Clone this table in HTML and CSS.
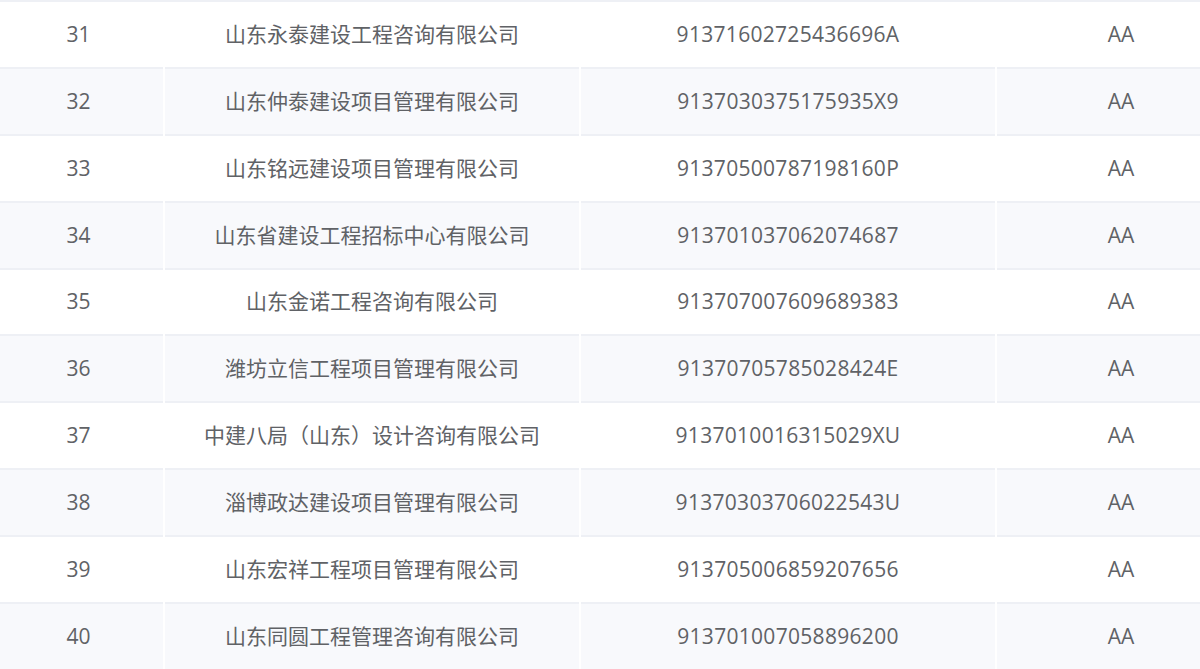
FILE: index.html
```html
<!DOCTYPE html>
<html lang="zh-CN">
<head>
<meta charset="utf-8">
<title>列表</title>
<link rel="stylesheet" href="styles.css">
</head>
<body>
<div class="wrap">
<table class="grid">
<colgroup><col class="c1"><col class="c2"><col class="c3"><col class="c4"></colgroup>
<tbody>
<tr><td>31</td><td>山东永泰建设工程咨询有限公司</td><td class="code">91371602725436696A</td><td>AA</td></tr>
<tr><td>32</td><td>山东仲泰建设项目管理有限公司</td><td class="code">9137030375175935X9</td><td>AA</td></tr>
<tr><td>33</td><td>山东铭远建设项目管理有限公司</td><td class="code">91370500787198160P</td><td>AA</td></tr>
<tr><td>34</td><td>山东省建设工程招标中心有限公司</td><td class="code">913701037062074687</td><td>AA</td></tr>
<tr><td>35</td><td>山东金诺工程咨询有限公司</td><td class="code">913707007609689383</td><td>AA</td></tr>
<tr><td>36</td><td>潍坊立信工程项目管理有限公司</td><td class="code">91370705785028424E</td><td>AA</td></tr>
<tr><td>37</td><td>中建八局（山东）设计咨询有限公司</td><td class="code">9137010016315029XU</td><td>AA</td></tr>
<tr><td>38</td><td>淄博政达建设项目管理有限公司</td><td class="code">91370303706022543U</td><td>AA</td></tr>
<tr><td>39</td><td>山东宏祥工程项目管理有限公司</td><td class="code">913705006859207656</td><td>AA</td></tr>
<tr><td>40</td><td>山东同圆工程管理咨询有限公司</td><td class="code">913701007058896200</td><td>AA</td></tr>
</tbody>
</table>
</div>
</body>
</html>
```
FILE: styles.css
```css
html, body {
  margin: 0;
  padding: 0;
  background: #ffffff;
  overflow: hidden;
}
.wrap {
  width: 1200px;
  height: 669px;
  overflow: hidden;
}
.grid {
  margin-left: -8px;
  width: 1252px;
  border-collapse: collapse;
  table-layout: fixed;
  font-family: "Open Sans", "Noto Sans CJK SC", sans-serif;
  font-size: 21px;
  color: #606266;
}
.c1 { width: 171px; }
.c2 { width: 416px; }
.c3 { width: 416px; }
.c4 { width: 249px; }
.grid td {
  height: 64.875px;
  padding: 0;
  text-align: center;
  vertical-align: middle;
  border-top: 2px solid #eef0f5;
  border-left: 2px solid #ffffff;
  line-height: 1;
}
.grid td.code {
  letter-spacing: 0.3px;
}
.grid tr:nth-child(even) td {
  background: #f8f9fc;
}
```
